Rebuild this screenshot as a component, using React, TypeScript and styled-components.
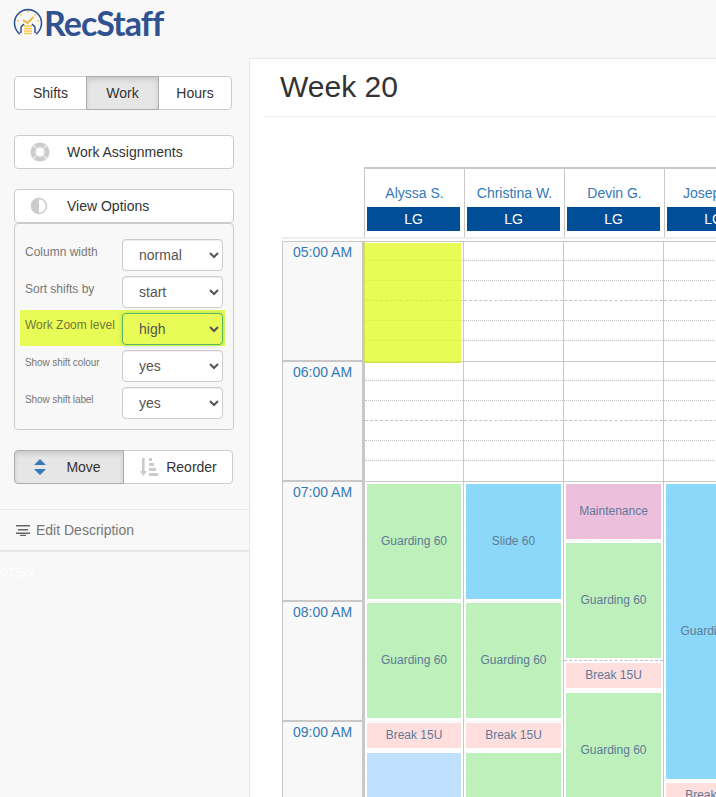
import styled, { createGlobalStyle } from 'styled-components';

const GlobalStyle = createGlobalStyle`
  html, body {
    margin: 0;
    padding: 0;
    height: 100%;
    overflow: hidden;
    background: #f8f8f8;
    font-family: "Liberation Sans", Arial, sans-serif;
    font-size: 14px;
    color: #333;
  }
  * { box-sizing: border-box; }
`;

const Page = styled.div`
  width: 716px;
  height: 797px;
  overflow: hidden;
  display: flex;
  flex-direction: column;
`;

const TopBar = styled.header`
  height: 58px;
  flex: none;
  display: flex;
  align-items: flex-start;
  padding: 8px 0 0 13px;
`;

const LogoText = styled.span`
  font-family: Lato, "Open Sans", sans-serif;
  font-weight: 700;
  font-size: 34px;
  line-height: 30px;
  letter-spacing: -1px;
  color: #2f5291;
  margin-left: 1px;
`;

const Body = styled.div`
  flex: 1;
  display: flex;
  min-height: 0;
`;

const Sidebar = styled.aside`
  width: 249px;
  flex: none;
  padding-top: 18px;
`;

const SideSection = styled.div<{ $mb: number }>`
  padding-left: 14px;
  margin-bottom: ${(p) => p.$mb}px;
`;

const ButtonGroup = styled.div<{ $width: number }>`
  display: flex;
  width: ${(p) => p.$width}px;
  height: 34px;
`;

const GroupButton = styled.button<{ $active?: boolean; $width: number; $gap?: number; $pr?: number }>`
  width: ${(p) => p.$width}px;
  height: 34px;
  flex: none;
  display: flex;
  align-items: center;
  justify-content: center;
  gap: ${(p) => p.$gap ?? 7}px;
  font: inherit;
  color: #333;
  cursor: pointer;
  margin-left: -1px;
  background: ${(p) => (p.$active ? '#e6e6e6' : '#fff')};
  border: 1px solid ${(p) => (p.$active ? '#adadad' : '#ccc')};
  box-shadow: ${(p) => (p.$active ? 'inset 0 3px 5px rgba(0,0,0,.125)' : 'none')};
  position: relative;
  z-index: ${(p) => (p.$active ? 1 : 0)};
  padding: 0 ${(p) => p.$pr ?? 0}px 0 0;
  &:first-child {
    margin-left: 0;
    border-radius: 4px 0 0 4px;
  }
  &:last-child {
    border-radius: 0 4px 4px 0;
  }
`;

const WideButton = styled.button`
  width: 220px;
  height: 34px;
  display: flex;
  align-items: center;
  padding: 0 0 0 15px;
  background: #fff;
  border: 1px solid #ccc;
  border-radius: 4px;
  font: inherit;
  color: #333;
  cursor: pointer;
`;

const WideIcon = styled.span`
  width: 37px;
  flex: none;
  display: flex;
`;

const OptionsPanel = styled.div`
  width: 220px;
  height: 207px;
  border: 1px solid #ccc;
  border-radius: 4px;
  padding: 15px 10px 10px;
  display: flex;
  flex-direction: column;
  gap: 5px;
`;

const OptionRow = styled.div<{ $highlight?: boolean }>`
  display: flex;
  justify-content: space-between;
  align-items: flex-start;
  ${(p) =>
    p.$highlight &&
    `
    background: #e9fb56;
    margin: -3px -2px -1px -5px;
    padding: 3px 2px 1px 5px;
  `}
`;

const OptionLabel = styled.label<{ $small?: boolean; $highlight?: boolean }>`
  font-size: ${(p) => (p.$small ? '10px' : '12px')};
  letter-spacing: ${(p) => (p.$small ? '-0.1px' : '0')};
  line-height: 14px;
  padding-top: ${(p) => (p.$highlight ? 5 : 6)}px;
  color: ${(p) => (p.$highlight ? '#6f7a3a' : '#777')};
`;

const OptionSelect = styled.select<{ $highlight?: boolean }>`
  width: 101px;
  height: 32px;
  flex: none;
  font: inherit;
  padding: 0 0 0 12px;
  border-radius: 4px;
  color: #555;
  background: ${(p) => (p.$highlight ? '#e9fb56' : '#fff')};
  border: 1px solid ${(p) => (p.$highlight ? '#5cb85c' : '#ccc')};
  box-shadow: ${(p) => (p.$highlight ? '0 0 4px rgba(92,184,92,.5)' : 'inset 0 1px 1px rgba(0,0,0,.075)')};
`;

const EditRow = styled.div`
  border-top: 1px solid #e7e7e7;
  border-bottom: 2px solid #e7e7e7;
  height: 43px;
  display: flex;
  align-items: center;
  gap: 6px;
  padding-left: 16px;
  color: #777;
  margin-top: -1px;
`;

const FaintNote = styled.div`
  color: #fff;
  font-size: 13px;
  padding-top: 13px;
`;

const Main = styled.main`
  flex: 1;
  min-width: 0;
  background: #fff;
  border-top: 1px solid #e7e7e7;
  border-left: 1px solid #e7e7e7;
  overflow: hidden;
`;

const PageHeader = styled.div`
  margin-left: 15px;
  height: 58px;
  border-bottom: 1px solid #eee;
  padding-left: 15px;
`;

const PageTitle = styled.h1`
  margin: 0;
  font-weight: 400;
  font-size: 30px;
  line-height: 33px;
  padding-top: 11px;
  color: #333;
`;

const Schedule = styled.div`
  margin: 50px 0 0 32px;
  width: 600px;
`;

const HeaderRow = styled.div`
  display: flex;
  padding-left: 82px;
  height: 72px;
  border-bottom: 2px solid #eee;
  margin-bottom: 2px;
`;

const HeaderCell = styled.div`
  width: 100px;
  flex: none;
  border-top: 2px solid #c8c8c8;
  border-left: 1px solid #c8c8c8;
  padding: 0 2px;
  text-align: center;
`;

const StaffName = styled.div`
  height: 38px;
  padding-top: 16px;
  line-height: 17px;
  color: #337ab7;
`;

const Role = styled.div`
  height: 24px;
  line-height: 24px;
  background: #004e98;
  color: #fff;
  margin-right: 2px;
`;

const GridRow = styled.div`
  display: flex;
`;

const TimeColumn = styled.div`
  width: 82px;
  flex: none;
`;

const TimeCell = styled.div`
  height: 120px;
  background: #f8f8f8;
  border: solid #c8c8c8;
  border-width: 1px 2px 1px 1px;
  text-align: center;
  padding-top: 2px;
  line-height: 17px;
  color: #337ab7;
`;

const DayColumn = styled.div<{ $width: number }>`
  position: relative;
  width: ${(p) => p.$width}px;
  height: 600px;
  flex: none;
  padding: 0 2px;
  border-left: 1px solid #c8c8c8;
`;

const HourLines = styled.div`
  position: absolute;
  inset: 0;
`;

const Hour = styled.div`
  height: 120px;
  border-top: 1px solid #c8c8c8;
`;

const Tick = styled.div<{ $dashed?: boolean }>`
  height: 20px;
  border-bottom: 1px ${(p) => (p.$dashed ? 'dashed' : 'dotted')} #c4c4c4;
  position: relative;
  top: -1px;
`;

const Shift = styled.div<{ $color: string; $top: number; $height: number }>`
  position: relative;
  height: ${(p) => p.$height}px;
  margin-top: ${(p) => p.$top}px;
  background: ${(p) => p.$color};
  box-shadow: 0 0 0 2px rgba(255, 255, 255, 0.85);
  display: flex;
  align-items: center;
  justify-content: center;
  padding-bottom: 2px;
  font-size: 12px;
  white-space: nowrap;
  overflow: hidden;
  color: #5f7a96;
`;

const HighlightedSlot = styled.div`
  position: relative;
  height: 120px;
  margin: 2px 0 0 -3px;
  background: rgba(226, 250, 30, 0.75);
  box-shadow: inset 1px -1px 0 #d5e24f;
`;

const colors = {
  guarding: 'rgba(187, 240, 185, 0.97)',
  slide: 'rgba(135, 215, 250, 0.97)',
  maintenance: 'rgba(235, 189, 220, 0.97)',
  break: 'rgba(255, 221, 221, 0.97)',
  pale: 'rgba(190, 223, 255, 0.97)',
};

type ShiftData = { label: string; color: string; top: number; height: number };

const columns: { name: string; width: number; highlight?: boolean; shifts: ShiftData[] }[] = [
  {
    name: 'Alyssa S.',
    width: 99,
    highlight: true,
    shifts: [
      { label: 'Guarding 60', color: colors.guarding, top: 121, height: 115 },
      { label: 'Guarding 60', color: colors.guarding, top: 4, height: 115 },
      { label: 'Break 15U', color: colors.break, top: 5, height: 25 },
      { label: '', color: colors.pale, top: 5, height: 115 },
    ],
  },
  {
    name: 'Christina W.',
    width: 100,
    shifts: [
      { label: 'Slide 60', color: colors.slide, top: 243, height: 115 },
      { label: 'Guarding 60', color: colors.guarding, top: 4, height: 115 },
      { label: 'Break 15U', color: colors.break, top: 5, height: 25 },
      { label: '', color: colors.guarding, top: 5, height: 115 },
    ],
  },
  {
    name: 'Devin G.',
    width: 100,
    shifts: [
      { label: 'Maintenance', color: colors.maintenance, top: 243, height: 55 },
      { label: 'Guarding 60', color: colors.guarding, top: 4, height: 115 },
      { label: 'Break 15U', color: colors.break, top: 5, height: 25 },
      { label: 'Guarding 60', color: colors.guarding, top: 5, height: 115 },
    ],
  },
  {
    name: 'Joseph R.',
    width: 100,
    shifts: [
      { label: 'Guarding 60', color: colors.slide, top: 243, height: 295 },
      { label: 'Break 15U', color: colors.break, top: 4, height: 25 },
    ],
  },
];

const hours = ['05:00 AM', '06:00 AM', '07:00 AM', '08:00 AM', '09:00 AM'];

const options = [
  { label: 'Column width', value: 'normal', choices: ['narrow', 'normal', 'wide'] },
  { label: 'Sort shifts by', value: 'start', choices: ['start', 'end', 'name'] },
  { label: 'Work Zoom level', value: 'high', choices: ['low', 'medium', 'high'], highlight: true },
  { label: 'Show shift colour', value: 'yes', choices: ['yes', 'no'], small: true },
  { label: 'Show shift label', value: 'yes', choices: ['yes', 'no'], small: true },
];

function LogoMark() {
  return (
    <svg width="30" height="28" viewBox="0 0 30 28" fill="none">
      <path d="M7 26 A13.5 13.5 0 1 1 23 26" stroke="#2f5291" strokeWidth="1.6" />
      <path d="M15 3v2M4 13h2M24 13h2M7 6l1.4 1.4M23 6l-1.4 1.4" stroke="#f7c64a" strokeWidth="1.4" />
      <path d="M10 12l4.5 3 6-6" stroke="#f2b632" strokeWidth="2" />
      <path d="M8 25v-6l3-3M22 25v-6l-3-3" stroke="#2f5291" strokeWidth="1.5" />
      <path d="M11 18h8M11 20.5h8M11 23h8M11 25.5h8" stroke="#f7c64a" strokeWidth="1.4" />
    </svg>
  );
}

function LifeRingIcon() {
  return (
    <svg width="20" height="20" viewBox="0 0 20 20">
      <circle cx="10" cy="10" r="7" fill="none" stroke="#ccc" strokeWidth="5" />
      <path d="M3.5 3.5l3 3M16.5 3.5l-3 3M3.5 16.5l3-3M16.5 16.5l-3-3" stroke="#f0f0f0" strokeWidth="1.2" />
    </svg>
  );
}

function ContrastIcon() {
  return (
    <svg width="18" height="18" viewBox="0 0 18 18">
      <circle cx="9" cy="9" r="7.5" fill="#fff" stroke="#ccc" strokeWidth="1.5" />
      <path d="M9 1a8 8 0 0 0 0 16z" fill="#ccc" />
    </svg>
  );
}

function MoveIcon() {
  return (
    <svg width="14" height="18" viewBox="0 0 14 18">
      <path d="M7 1l6 6H1zM7 17l-6-6h12z" fill="#337ab7" />
    </svg>
  );
}

function ReorderIcon() {
  return (
    <svg width="20" height="20" viewBox="0 0 20 20" fill="#ccc">
      <path d="M3 1h2.6v13H8l-3.700 5L1 14h2zM10 1h3v3h-3zM10 6h5v3h-5zM10 11h7v3h-7zM10 16h9v3h-9z" />
    </svg>
  );
}

function AlignIcon() {
  return (
    <svg width="14" height="12" viewBox="0 0 14 12" fill="#666">
      <path d="M0 1h14v1.6H0zM2 5h10v1.6H2zM0 8.500h14V10H0zM4 10.800h6V12H4z" />
    </svg>
  );
}

export default function App() {
  return (
    <Page>
      <GlobalStyle />
      <TopBar>
        <LogoMark />
        <LogoText>RecStaff</LogoText>
      </TopBar>
      <Body>
        <Sidebar>
          <SideSection $mb={25}>
            <ButtonGroup $width={218}>
              <GroupButton $width={73}>Shifts</GroupButton>
              <GroupButton $width={73} $active>Work</GroupButton>
              <GroupButton $width={74}>Hours</GroupButton>
            </ButtonGroup>
          </SideSection>
          <SideSection $mb={20}>
            <WideButton>
              <WideIcon><LifeRingIcon /></WideIcon>
              Work Assignments
            </WideButton>
          </SideSection>
          <SideSection $mb={20}>
            <WideButton>
              <WideIcon><ContrastIcon /></WideIcon>
              View Options
            </WideButton>
            <OptionsPanel>
              {options.map((o) => (
                <OptionRow key={o.label} $highlight={o.highlight}>
                  <OptionLabel $small={o.small} $highlight={o.highlight}>{o.label}</OptionLabel>
                  <OptionSelect $highlight={o.highlight} defaultValue={o.value}>
                    {o.choices.map((c) => (
                      <option key={c}>{c}</option>
                    ))}
                  </OptionSelect>
                </OptionRow>
              ))}
            </OptionsPanel>
          </SideSection>
          <SideSection $mb={26}>
            <ButtonGroup $width={219}>
              <GroupButton $width={110} $active $gap={19} $pr={4}><MoveIcon />Move</GroupButton>
              <GroupButton $width={110}><ReorderIcon />Reorder</GroupButton>
            </ButtonGroup>
          </SideSection>
          <EditRow>
            <AlignIcon />
            Edit Description
          </EditRow>
          <FaintNote>075xx</FaintNote>
        </Sidebar>
        <Main>
          <PageHeader>
            <PageTitle>Week 20</PageTitle>
          </PageHeader>
          <Schedule>
            <HeaderRow>
              {columns.map((c) => (
                <HeaderCell key={c.name}>
                  <StaffName>{c.name}</StaffName>
                  <Role>LG</Role>
                </HeaderCell>
              ))}
            </HeaderRow>
            <GridRow>
              <TimeColumn>
                {hours.map((h) => (
                  <TimeCell key={h}>{h}</TimeCell>
                ))}
              </TimeColumn>
              {columns.map((c) => (
                <DayColumn key={c.name} $width={c.width}>
                  <HourLines>
                    {hours.map((h) => (
                      <Hour key={h}>
                        <Tick />
                        <Tick />
                        <Tick $dashed />
                        <Tick />
                        <Tick />
                      </Hour>
                    ))}
                  </HourLines>
                  {c.highlight && <HighlightedSlot />}
                  {c.shifts.map((s, i) => (
                    <Shift key={i} $color={s.color} $top={s.top} $height={s.height}>
                      {s.label}
                    </Shift>
                  ))}
                </DayColumn>
              ))}
            </GridRow>
          </Schedule>
        </Main>
      </Body>
    </Page>
  );
}
